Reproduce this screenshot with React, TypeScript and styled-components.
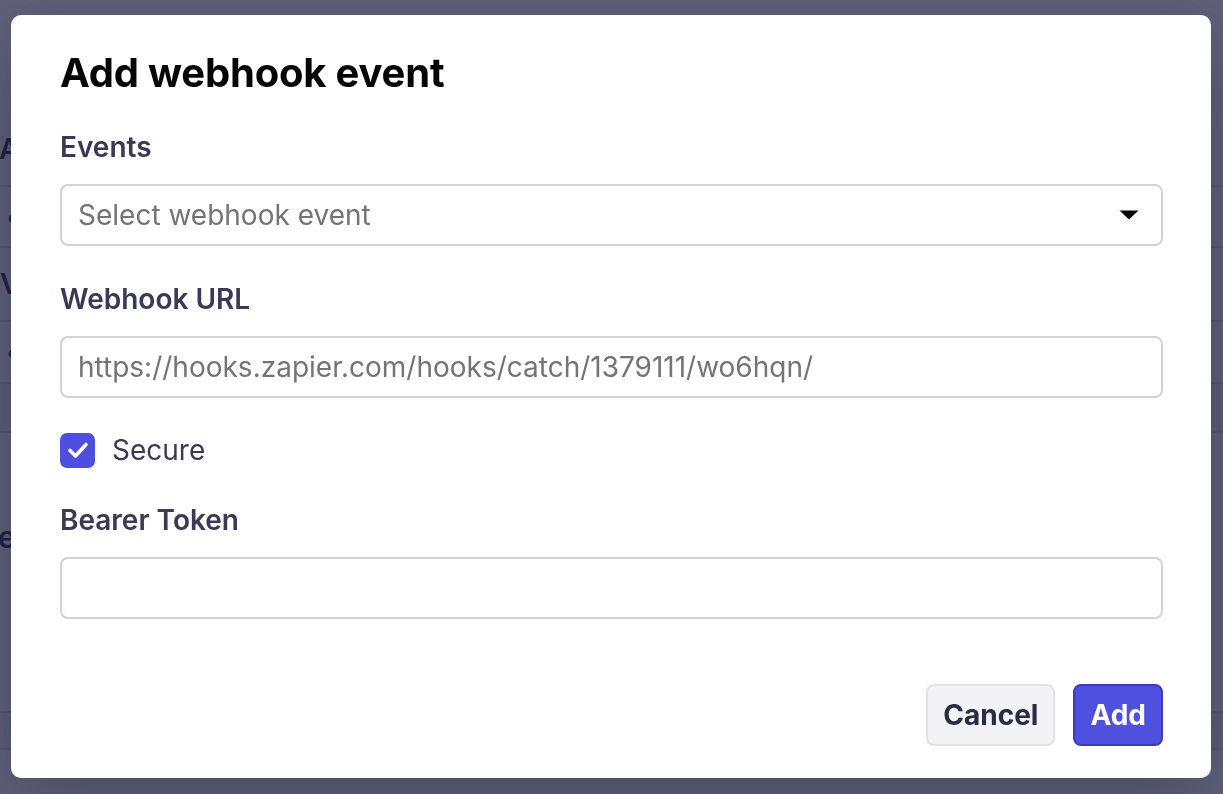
import styled, { createGlobalStyle } from "styled-components";

const GlobalStyle = createGlobalStyle`
  html, body {
    margin: 0;
    padding: 0;
    height: 100%;
    overflow: hidden;
  }
  body {
    font-family: Inter, "Noto Sans", "Liberation Sans", sans-serif;
    background: #ffffff;
  }
  #root {
    height: 100%;
  }
`;

const Page = styled.div`
  height: 794px;
  background: #ffffff;
  color: #1c1c38;
  padding-top: 128px;
  box-sizing: border-box;
`;

const PageHeading = styled.h2`
  margin: 0 0 0 -1px;
  height: 59px;
  font-size: 28px;
  font-weight: 600;
  line-height: 42px;
  border-bottom: 2px solid #d6d6de;
  box-sizing: border-box;
`;

const PageRow = styled.div<{ $h: number; $indent?: number }>`
  display: flex;
  align-items: center;
  height: ${(p) => p.$h}px;
  padding-left: ${(p) => p.$indent ?? 6}px;
  font-size: 28px;
  font-weight: 600;
  border-bottom: 2px solid #d6d6de;
  box-sizing: border-box;
`;

const PageSection = styled.div<{ $h: number }>`
  height: ${(p) => p.$h}px;
  padding-top: 86px;
  margin-left: -2px;
  font-size: 30px;
  font-weight: 600;
  border-bottom: 2px solid #d6d6de;
  box-sizing: border-box;
`;

const PageBand = styled.div<{ $h: number }>`
  height: ${(p) => p.$h}px;
  background: #f1f1f4;
  border-bottom: 2px solid #d6d6de;
  box-sizing: border-box;
`;

const Overlay = styled.div`
  position: fixed;
  inset: 0;
  background: rgba(36, 38, 70, 0.72);
  display: flex;
  align-items: flex-start;
  padding: 15px 11px;
`;

const Dialog = styled.div`
  width: 1200px;
  height: 763px;
  flex-shrink: 0;
  box-sizing: border-box;
  background: #ffffff;
  border-radius: 10px;
  padding: 34px 48px 32px 49px;
  display: flex;
  flex-direction: column;
  box-shadow: 0 20px 80px rgba(10, 12, 30, 0.3);
`;

const Title = styled.h1`
  margin: 0 0 32px;
  font-size: 40px;
  line-height: 48px;
  font-weight: 700;
  color: #050505;
  letter-spacing: -0.2px;
`;

const Form = styled.div`
  display: flex;
  flex-direction: column;
  gap: 35px;
`;

const Field = styled.div`
  display: flex;
  flex-direction: column;
  gap: 19px;
`;

const Label = styled.label`
  font-size: 28px;
  line-height: 36px;
  font-weight: 600;
  color: #393a55;
`;

const Box = styled.div`
  height: 62px;
  box-sizing: border-box;
  border: 2px solid #d3d3d6;
  border-radius: 8px;
  display: flex;
  align-items: center;
  padding: 0 22px 0 16px;
`;

const Placeholder = styled.span`
  flex: 1;
  font-size: 28px;
  color: #747474;
  white-space: nowrap;
`;

const CheckRow = styled.label`
  display: flex;
  align-items: center;
  gap: 17px;
  height: 34px;
`;

const CheckBox = styled.span`
  width: 35px;
  height: 35px;
  flex-shrink: 0;
  border-radius: 7px;
  background: #4f4fdf;
  display: flex;
  align-items: center;
  justify-content: center;
`;

const CheckText = styled.span`
  font-size: 28px;
  color: #393a55;
`;

const Footer = styled.div`
  margin-top: auto;
  display: flex;
  justify-content: flex-end;
  gap: 18px;
`;

const Button = styled.button<{ $primary?: boolean }>`
  height: 62px;
  box-sizing: border-box;
  padding: 0 15px;
  border-radius: 8px;
  font-family: inherit;
  font-size: 28px;
  font-weight: 700;
  border: 2px solid ${(p) => (p.$primary ? "#3b3bbd" : "#e3e3e6")};
  background: ${(p) => (p.$primary ? "#5050de" : "#f3f3f5")};
  color: ${(p) => (p.$primary ? "#ffffff" : "#2a2b45")};
`;

function Caret() {
  return (
    <svg width="20" height="10" viewBox="0 0 20 10">
      <path d="M0.5 0.5 H19.5 L10 9.5 Z" fill="#000" />
    </svg>
  );
}

function Check() {
  return (
    <svg width="26" height="26" viewBox="0 0 26 26" fill="none">
      <path
        d="M5 13.5 L10.5 19 L21 7.5"
        stroke="#fff"
        strokeWidth="3.6"
        strokeLinecap="round"
        strokeLinejoin="round"
      />
    </svg>
  );
}

export default function App() {
  return (
    <>
      <GlobalStyle />
      <Page>
        <PageHeading>A</PageHeading>
        <PageRow $h={61}>•</PageRow>
        <PageRow $h={74} $indent={0}>
          V
        </PageRow>
        <PageRow $h={62}>•</PageRow>
        <PageBand $h={49} />
        <PageSection $h={280}>e</PageSection>
        <PageBand $h={37} />
      </Page>
      <Overlay>
        <Dialog>
          <Title>Add webhook event</Title>
          <Form>
            <Field>
              <Label>Events</Label>
              <Box>
                <Placeholder>Select webhook event</Placeholder>
                <Caret />
              </Box>
            </Field>
            <Field>
              <Label>Webhook URL</Label>
              <Box>
                <Placeholder>https://hooks.zapier.com/hooks/catch/1379111/wo6hqn/</Placeholder>
              </Box>
            </Field>
            <CheckRow>
              <CheckBox>
                <Check />
              </CheckBox>
              <CheckText>Secure</CheckText>
            </CheckRow>
            <Field>
              <Label>Bearer Token</Label>
              <Box />
            </Field>
          </Form>
          <Footer>
            <Button>Cancel</Button>
            <Button $primary>Add</Button>
          </Footer>
        </Dialog>
      </Overlay>
    </>
  );
}
